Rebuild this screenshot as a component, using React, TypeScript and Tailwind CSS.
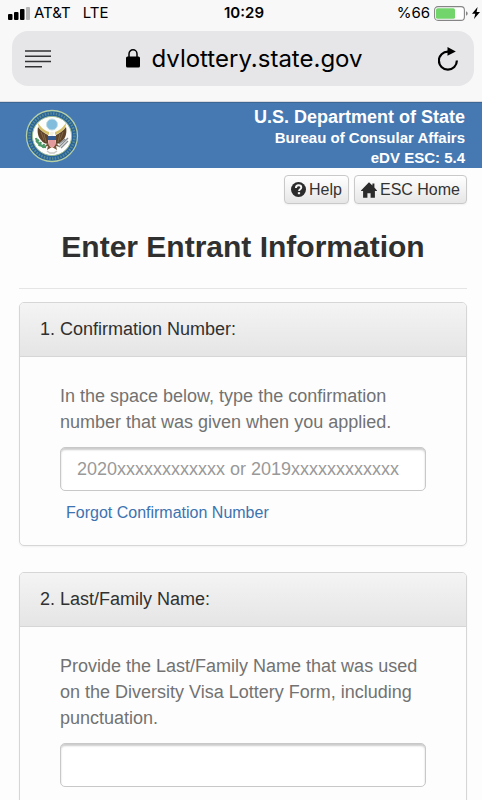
import type { ReactNode } from "react";

function SignalBars() {
  return (
    <svg width="22" height="13" viewBox="0 0 22 13" aria-hidden="true">
      <rect x="0" y="7" width="4.500" height="6" rx="1" fill="#000" />
      <rect x="6" y="5" width="4.500" height="8" rx="1" fill="#000" />
      <rect x="12" y="2" width="4.500" height="11" rx="1" fill="#000" />
      <rect x="18" y="0" width="4" height="13" rx="1" fill="#b5b5b6" />
    </svg>
  );
}

function Battery() {
  return (
    <svg width="34" height="15" viewBox="0 0 34 15" aria-hidden="true">
      <rect x="0.6" y="0.6" width="29.8" height="13.8" rx="3.4" fill="#fff" stroke="#858585" strokeWidth="1.1" />
      <rect x="2" y="2.2" width="19" height="10.6" rx="1.6" fill="#72d56c" />
      <path d="M32 5.2c1.1.5 1.7 1.3 1.7 2.3s-.6 1.8-1.7 2.3z" fill="#858585" />
    </svg>
  );
}

function Bolt() {
  return (
    <svg width="8" height="12" viewBox="0 0 8 12" aria-hidden="true">
      <path d="M5.6 0 0 6.8h3.3L2 12l6-7H4.6z" fill="#000" />
    </svg>
  );
}

function ReaderIcon() {
  return (
    <svg width="26" height="18" viewBox="0 0 26 18" aria-hidden="true">
      <path d="M0 1h26M0 6.3h26M0 11.5h26M0 16.7h17" stroke="#333336" strokeWidth="1.5" />
    </svg>
  );
}

function LockIcon() {
  return (
    <svg width="14" height="19" viewBox="0 0 14 19" aria-hidden="true">
      <rect x="0" y="7.5" width="14" height="11" rx="1.5" fill="#000" />
      <path d="M3 8.5V5a4 4.2 0 0 1 8 0v3.5" fill="none" stroke="#000" strokeWidth="1.5" />
    </svg>
  );
}

function ReloadIcon() {
  return (
    <svg width="20" height="24" viewBox="0 0 20 24" aria-hidden="true">
      <path d="M12 4.6H10a9 9 0 1 0 8.900 9" fill="none" stroke="#000" strokeWidth="2.2" />
      <path d="M9.500 0 17.800 4.400 9.500 8.800z" fill="#000" />
    </svg>
  );
}

function HelpIcon() {
  return (
    <svg width="15" height="15" viewBox="0 0 14 14" aria-hidden="true">
      <circle cx="7" cy="7" r="7" fill="#2b2b2b" />
      <path d="M4.600 5.500C4.600 3.900 5.600 3 7.100 3s2.500.9 2.500 2.200C9.600 6.700 7.500 6.900 7.500 8.500" fill="none" stroke="#f4f4f4" strokeWidth="1.800" />
      <rect x="6.400" y="9.500" width="2.100" height="1.900" fill="#f4f4f4" />
    </svg>
  );
}

function HomeIcon() {
  return (
    <svg width="16" height="16" viewBox="0 0 16 16" aria-hidden="true">
      <path d="M8 .2 11.400 3.600V1.600h2v4L16 8.400v.6h-2.100v6.800H9.600v-4.600H6.400v4.600H2.100V9H0v-.6z" fill="#2b2b2b" />
    </svg>
  );
}

function StateSeal() {
  return (
    <svg width="54" height="54" viewBox="0 0 54 54" role="img" aria-label="Department of State seal">
      <circle cx="27" cy="27" r="25.500" fill="#28639a" stroke="#b6cfa4" strokeWidth="1.300" />
      <circle cx="27" cy="27" r="22.500" fill="none" stroke="#80aa91" strokeWidth="2.600" strokeDasharray="1.500 1.300" opacity=".55" />
      <circle cx="27" cy="27" r="19.600" fill="#fdfdfb" stroke="#9fbd91" strokeWidth="1" />
      <path d="M24 23C18 21 16 18 13 14c0 5 3 8 7 10l4 2zM30 23c6-2 8-5 11-9 0 5-3 8-7 10l-4 2z" fill="#d5bf68" />
      <path d="M23 26C19 24 16 22 13 18c-1 5 0 10 3 13 2 3 5 4 8 4zM31 26c4-2 7-4 10-8 1 5 0 10-3 13-2 3-5 4-8 4z" fill="#604429" />
      <path d="M16 23l3 8M19 25l2 8M38 23l-3 8M35 25l-2 8" stroke="#927956" strokeWidth=".7" />
      <path d="M23 34l-4 4 4-1-1 4 5-3 5 3-1-4 4 1-4-4z" fill="#765638" />
      <circle cx="27" cy="15.500" r="5.500" fill="#82bddd" stroke="#c2dce2" strokeWidth="1" />
      <path d="M25 26c-1-3 1-4 3-3l2 1-2 1v3z" fill="#f2eee0" />
      <path d="M23 27h8v6c0 3-2 5-4 6-2-1-4-3-4-6z" fill="#efb1b2" />
      <path d="M23 27h8v4h-8z" fill="#345b91" />
      <path d="M25 31v6M27 31v7M29 31v6" stroke="#d2797f" strokeWidth=".8" />
      <path d="M11 29c1 5 5 9 10 9M11 33l3-2M14 37l2-4M18 39l1-4" fill="none" stroke="#4d9867" strokeWidth="2.300" />
      <path d="M34 38l9-9M36 39l7-7M34 35l6-5" stroke="#888e91" strokeWidth="1.400" />
      <path d="M22 42l3 2h4l3-2" fill="none" stroke="#c9cac6" strokeWidth="1.500" />
    </svg>
  );
}

function ToolbarButton({ icon, children }: { icon: ReactNode; children: ReactNode }) {
  return (
    <button
      type="button"
      className="flex h-[29px] items-center gap-[3px] rounded-[4px] border border-[#c9c9c9] bg-linear-to-b from-white to-[#e6e6e6] px-[6px] text-base text-[#333] shadow-xs"
    >
      {icon}
      <span>{children}</span>
    </button>
  );
}

function Panel({ title, children }: { title: string; children: ReactNode }) {
  return (
    <section className="rounded-[5px] border border-[#d6d6d6] shadow-xs">
      <h2 className="rounded-t-[4px] border-b border-[#d6d6d6] bg-linear-to-b from-[#f4f4f4] to-[#e5e5e5] px-5 py-[13px] text-lg leading-[27px] text-[#303030]">
        {title}
      </h2>
      <div className="px-10 pt-[26px] pb-5">{children}</div>
    </section>
  );
}

const fieldClass =
  "mt-3 block h-11 w-full rounded-[5px] border border-[#c8c8c8] bg-white px-4 text-lg text-[#555] shadow-[inset_0_2px_2px_#cccccc] placeholder:text-[#999] focus:outline-[#4679b2]";

export default function App() {
  return (
    <div className="flex h-screen flex-col overflow-hidden bg-[#fdfdfd] font-['Liberation_Sans',Arial,sans-serif]">
      <div className="shrink-0 border-b border-[#d9dadd] bg-[#f8f8f9] pb-[15px] font-['Inter',sans-serif] text-black">
        <div className="grid h-[31px] grid-cols-[1fr_auto_1fr] items-center pr-[2px] pb-[5px] pl-2 text-[15px] leading-5">
          <div className="flex items-center gap-1">
            <SignalBars />
            <span>AT&amp;T</span>
            <span className="ml-2">LTE</span>
          </div>
          <time className="font-semibold">10:29</time>
          <div className="flex items-center justify-end gap-1">
            <span>%66</span>
            <Battery />
            <Bolt />
          </div>
        </div>
        <div className="mr-2 ml-3 flex h-[55px] items-center justify-between rounded-2xl bg-[#e6e6e8] pr-4 pl-[13px]">
          <button type="button" aria-label="Reader view">
            <ReaderIcon />
          </button>
          <div className="flex items-center gap-[11px]">
            <LockIcon />
            <span className="text-2xl">dvlottery.state.gov</span>
          </div>
          <button type="button" aria-label="Reload page">
            <ReloadIcon />
          </button>
        </div>
      </div>

      <header className="flex h-[66px] shrink-0 items-center justify-between border-t border-[#3b6695] bg-[#4679b2] pr-[17px] pl-[25px] text-white">
        <StateSeal />
        <div className="pt-[2px] text-right text-[15px] leading-5 font-bold">
          <p className="text-lg leading-[22px]">U.S. Department of State</p>
          <p>Bureau of Consular Affairs</p>
          <p>eDV ESC: 5.4</p>
        </div>
      </header>

      <main className="px-[15px] pt-[7px]">
        <nav className="flex justify-end gap-[5px]">
          <ToolbarButton icon={<HelpIcon />}>Help</ToolbarButton>
          <ToolbarButton icon={<HomeIcon />}>ESC Home</ToolbarButton>
        </nav>

        <div className="pl-1">
          <h1 className="mt-[25px] mb-[13px] border-b border-[#e5e5e5] pb-[23px] text-center text-[30px] leading-9 font-bold text-[#303030]">
            Enter Entrant Information
          </h1>
          <div className="flex flex-col gap-[26px]">
            <Panel title="1. Confirmation Number:">
              <label htmlFor="confirmation" className="block text-lg leading-[26px] text-[#727272]">
                In the space below, type the confirmation number that was given when you applied.
              </label>
              <input
                id="confirmation"
                type="text"
                placeholder="2020xxxxxxxxxxxx or 2019xxxxxxxxxxxx"
                className={fieldClass}
              />
              <a href="#forgot" className="mt-3 ml-[6px] inline-block text-base leading-5 text-[#3c73b0]">
                Forgot Confirmation Number
              </a>
            </Panel>
            <Panel title="2. Last/Family Name:">
              <label htmlFor="family-name" className="block text-lg leading-[26px] text-[#727272]">
                Provide the Last/Family Name that was used on the Diversity Visa Lottery Form, including
                punctuation.
              </label>
              <input id="family-name" type="text" className={fieldClass} />
            </Panel>
          </div>
        </div>
      </main>
    </div>
  );
}
